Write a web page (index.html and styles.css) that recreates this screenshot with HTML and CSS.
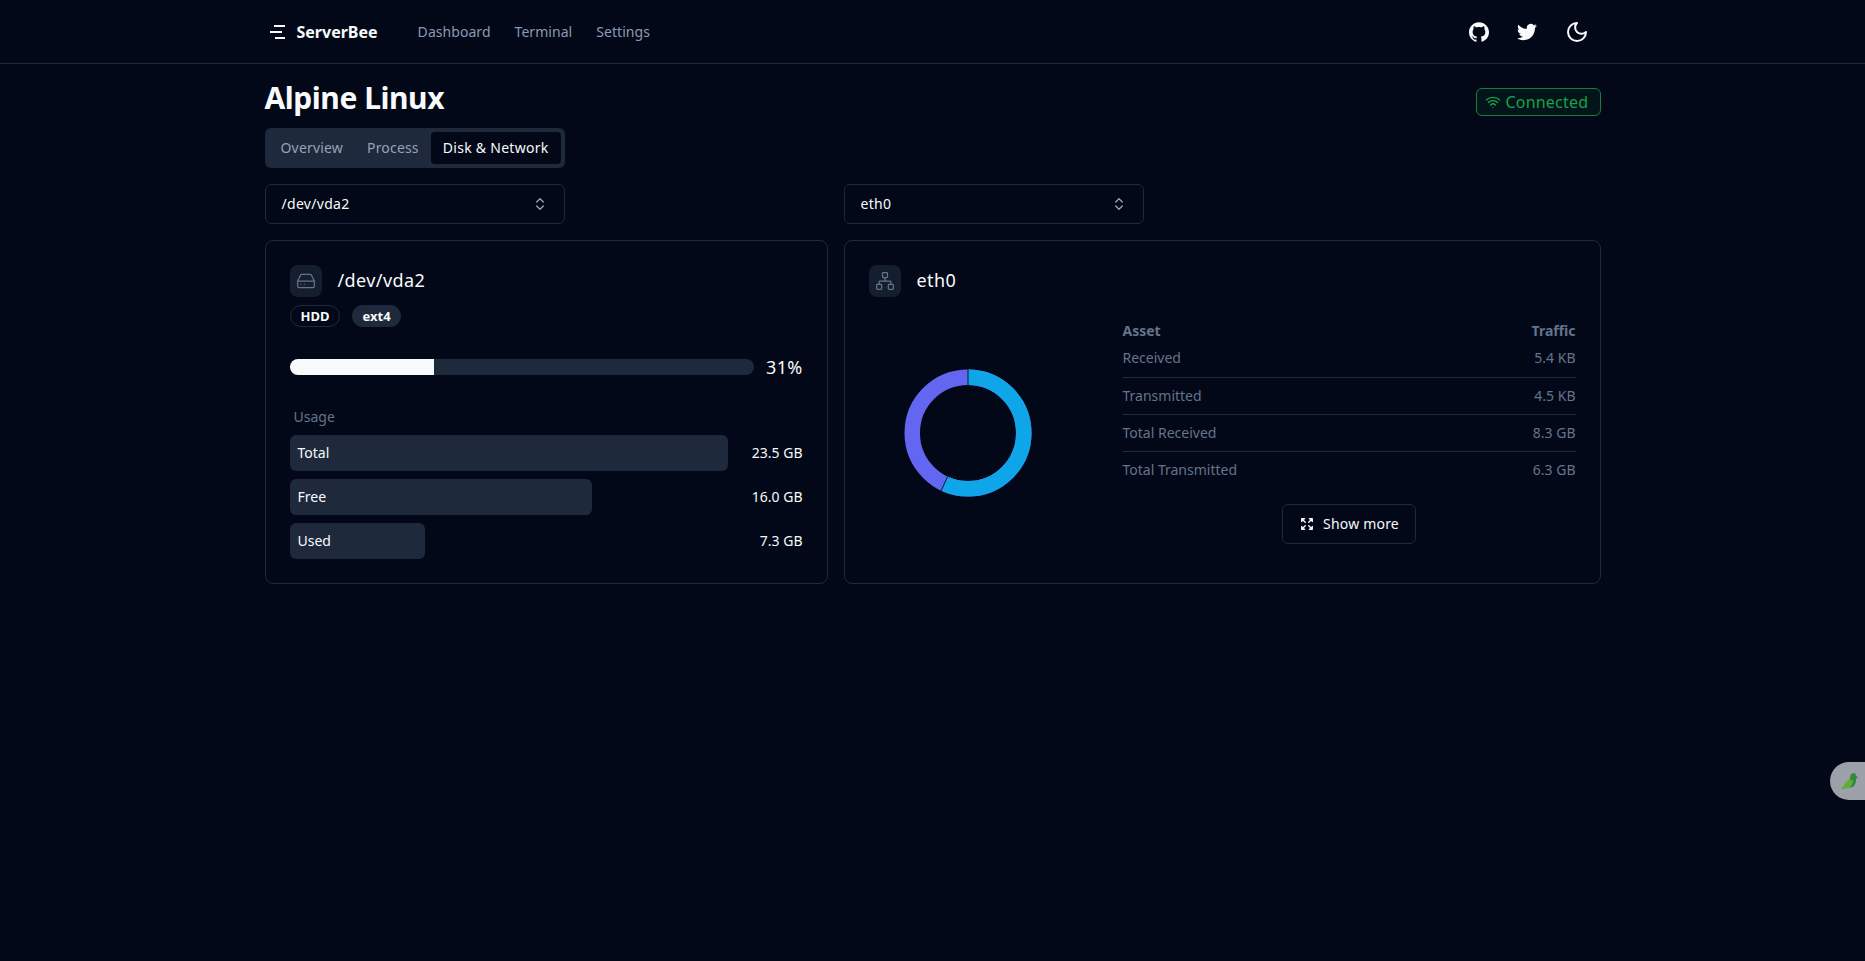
FILE: index.html
```html
<!DOCTYPE html>
<html lang="en">
<head>
<meta charset="utf-8">
<title>ServerBee</title>
<link rel="stylesheet" href="styles.css">
</head>
<body>
<header class="topbar">
  <div class="topbar-inner">
    <a class="brand">
      <svg class="brand-mark" viewBox="0 0 15 14" fill="none" stroke="currentColor" stroke-width="2"><path d="M4 1H15M0 7H12M5 13H15"/></svg>
      <span>ServerBee</span>
    </a>
    <nav class="nav"><a>Dashboard</a><a>Terminal</a><a>Settings</a></nav>
    <div class="topbar-icons">
      <svg class="top-icon" viewBox="0 0 24 24" fill="currentColor"><path d="M12 .297c-6.63 0-12 5.373-12 12 0 5.303 3.438 9.8 8.205 11.385.6.113.82-.258.82-.577 0-.285-.01-1.04-.015-2.04-3.338.724-4.042-1.61-4.042-1.61C4.422 18.07 3.633 17.7 3.633 17.7c-1.087-.744.084-.729.084-.729 1.205.084 1.838 1.236 1.838 1.236 1.07 1.835 2.809 1.305 3.495.998.108-.776.417-1.305.76-1.605-2.665-.3-5.466-1.332-5.466-5.93 0-1.31.465-2.38 1.235-3.22-.135-.303-.54-1.523.105-3.176 0 0 1.005-.322 3.3 1.23.96-.267 1.98-.399 3-.405 1.02.006 2.04.138 3 .405 2.28-1.552 3.285-1.23 3.285-1.23.645 1.653.24 2.873.12 3.176.765.84 1.23 1.91 1.23 3.22 0 4.61-2.805 5.625-5.475 5.92.42.36.81 1.096.81 2.22 0 1.606-.015 2.896-.015 3.286 0 .315.21.69.825.57C20.565 22.092 24 17.592 24 12.297c0-6.627-5.373-12-12-12"/></svg>
      <svg class="top-icon" viewBox="0 0 24 24" fill="currentColor"><path d="M23.953 4.57a10 10 0 01-2.825.775 4.958 4.958 0 002.163-2.723c-.951.555-2.005.959-3.127 1.184a4.92 4.92 0 00-8.384 4.482C7.69 8.095 4.067 6.13 1.64 3.162a4.822 4.822 0 00-.666 2.475c0 1.71.87 3.213 2.188 4.096a4.904 4.904 0 01-2.228-.616v.06a4.923 4.923 0 003.946 4.827 4.996 4.996 0 01-2.212.085 4.936 4.936 0 004.604 3.417 9.867 9.867 0 01-6.102 2.105c-.39 0-.779-.023-1.17-.067a13.995 13.995 0 007.557 2.209c9.053 0 13.998-7.496 13.998-13.985 0-.21 0-.42-.015-.63A9.935 9.935 0 0024 4.59z"/></svg>
      <svg class="moon-icon" viewBox="0 0 24 24" fill="none" stroke="currentColor" stroke-width="2" stroke-linecap="round" stroke-linejoin="round"><path d="M12 3a6 6 0 0 0 9 9 9 9 0 1 1-9-9Z"/></svg>
    </div>
  </div>
</header>

<main class="page">
  <div class="title-row">
    <h1>Alpine Linux</h1>
    <div class="status">
      <svg class="status-icon" viewBox="0 0 24 24" fill="none" stroke="currentColor" stroke-width="2" stroke-linecap="round" stroke-linejoin="round"><path d="M12 20h.01"/><path d="M2 8.82a15 15 0 0 1 20 0"/><path d="M5 12.859a10 10 0 0 1 14 0"/><path d="M8.5 16.429a5 5 0 0 1 7 0"/></svg>
      <span>Connected</span>
    </div>
  </div>

  <div class="tabs">
    <span class="tab">Overview</span>
    <span class="tab">Process</span>
    <span class="tab tab-active">Disk &amp; Network</span>
  </div>

  <div class="columns">
    <div class="select">
      <span>/dev/vda2</span>
      <svg class="sort-icon" viewBox="0 0 24 24" fill="none" stroke="currentColor" stroke-width="2" stroke-linecap="round" stroke-linejoin="round"><path d="m7 15 5 5 5-5"/><path d="m7 9 5-5 5 5"/></svg>
    </div>
    <div class="select-cell">
      <div class="select">
        <span>eth0</span>
        <svg class="sort-icon" viewBox="0 0 24 24" fill="none" stroke="currentColor" stroke-width="2" stroke-linecap="round" stroke-linejoin="round"><path d="m7 15 5 5 5-5"/><path d="m7 9 5-5 5 5"/></svg>
      </div>
    </div>

    <section class="card">
      <div class="card-head">
        <div class="icon-box">
          <svg viewBox="0 0 24 24" fill="none" stroke="currentColor" stroke-width="2" stroke-linecap="round" stroke-linejoin="round"><path d="M22 12H2"/><path d="M5.45 5.11 2 12v6a2 2 0 0 0 2 2h16a2 2 0 0 0 2-2v-6l-3.45-6.89A2 2 0 0 0 16.76 4H7.24a2 2 0 0 0-1.79 1.11z"/><path d="M6 16h.01"/><path d="M10 16h.01"/></svg>
        </div>
        <h2>/dev/vda2</h2>
      </div>
      <div class="badges">
        <span class="badge badge-outline">HDD</span>
        <span class="badge badge-solid">ext4</span>
      </div>
      <div class="progress-row">
        <div class="progress"><div class="progress-fill" style="width:31%"></div></div>
        <span class="progress-label">31%</span>
      </div>
      <div class="usage-label">Usage</div>
      <div class="usage-list">
        <div class="usage-row"><div class="usage-track"><div class="usage-bar" style="width:100%">Total</div></div><span class="usage-value">23.5 GB</span></div>
        <div class="usage-row"><div class="usage-track"><div class="usage-bar" style="width:68.96%">Free</div></div><span class="usage-value">16.0 GB</span></div>
        <div class="usage-row"><div class="usage-track"><div class="usage-bar" style="width:31.03%">Used</div></div><span class="usage-value">7.3 GB</span></div>
      </div>
    </section>

    <section class="card">
      <div class="card-head">
        <div class="icon-box">
          <svg viewBox="0 0 24 24" fill="none" stroke="currentColor" stroke-width="2" stroke-linecap="round" stroke-linejoin="round"><rect x="16" y="16" width="6" height="6" rx="1"/><rect x="2" y="16" width="6" height="6" rx="1"/><rect x="9" y="2" width="6" height="6" rx="1"/><path d="M5 16v-3a1 1 0 0 1 1-1h12a1 1 0 0 1 1 1v3"/><path d="M12 12V8"/></svg>
        </div>
        <h2>eth0</h2>
      </div>
      <div class="net-body">
        <div class="donut-wrap">
          <svg class="donut" viewBox="0 0 128 128" fill="none">
            <circle class="donut-base" cx="64" cy="64" r="55.75"/>
            <circle class="donut-arc" cx="64" cy="64" r="55.75" pathLength="100" stroke-dasharray="57 43" transform="rotate(-90 64 64)"/>
            <path class="donut-sep" d="M64 0V16.500M43.700 107.500L37 122"/>
          </svg>
        </div>
        <div class="net-table-wrap">
          <table class="net-table">
            <thead><tr><th>Asset</th><th class="num">Traffic</th></tr></thead>
            <tbody>
              <tr><td>Received</td><td class="num">5.4 KB</td></tr>
              <tr><td>Transmitted</td><td class="num">4.5 KB</td></tr>
              <tr><td>Total Received</td><td class="num">8.3 GB</td></tr>
              <tr><td>Total Transmitted</td><td class="num">6.3 GB</td></tr>
            </tbody>
          </table>
          <button class="more-btn">
            <svg viewBox="0 0 24 24" fill="none" stroke="currentColor" stroke-width="2.400" stroke-linecap="round" stroke-linejoin="round"><path d="m21 21-6-6m6 6v-4.800m0 4.800h-4.800"/><path d="M3 16.200V21m0 0h4.800M3 21l6-6"/><path d="M21 7.800V3m0 0h-4.800M21 3l-6 6"/><path d="M3 7.800V3m0 0h4.800M3 3l6 6"/></svg>
            <span>Show more</span>
          </button>
        </div>
      </div>
    </section>
  </div>
</main>

<div class="float-bubble">
  <svg viewBox="0 0 17 17"><path fill="#2f8a3e" d="M9 5 10 1l4-1 1 3 2 1-2 2c0 4-1 6-3 8l-6 1Z"/><path fill="#5fae3a" d="M0 16 6 8c2-2 6-2 6 0 0 3-2 6-5 7-2 1-5 1-7 1Z"/></svg>
</div>
</body>
</html>
```
FILE: styles.css
```css
* { box-sizing: border-box; }
html, body { margin: 0; height: 100%; }
body {
  background: #020817;
  color: #f8fafc;
  font-family: "Noto Sans", "Open Sans", sans-serif;
  font-size: 14px;
  line-height: 20px;
  overflow: hidden;
}
.topbar { height: 64px; border-bottom: 1px solid #1e293b; }
.topbar-inner {
  width: 1336px;
  height: 63px;
  margin: 0 auto;
  display: flex;
  align-items: center;
}
.brand { display: flex; align-items: center; gap: 12px; margin-left: 5px; font-weight: 700; font-size: 16px; }
.brand-mark { width: 15px; height: 14px; }
.nav { display: flex; gap: 24px; margin-left: 40px; color: #8b9ab4; letter-spacing: .05px; }
.topbar-icons { margin-left: auto; display: flex; align-items: center; gap: 28px; padding-right: 12px; }
.top-icon { width: 20px; height: 20px; }
.moon-icon { width: 24px; height: 24px; }
.page { width: 1336px; margin: 0 auto; }
.title-row { display: flex; justify-content: space-between; align-items: flex-start; height: 64px; }
h1 { margin: 0; font-size: 30px; line-height: 36px; font-weight: 700; padding-top: 16px; letter-spacing: -.45px; }
.status {
  margin-top: 24px;
  height: 28px;
  width: 125px;
  display: flex;
  align-items: center;
  gap: 5px;
  padding-left: 8px;
  border: 1px solid #15803d;
  border-radius: 6px;
  background: rgba(22, 163, 74, .08);
  color: #16a34a;
  font-size: 16px;
  letter-spacing: .2px;
}
.status-icon { width: 16px; height: 16px; }
.tabs {
  display: inline-flex;
  height: 40px;
  padding: 4px;
  background: #1e293b;
  border-radius: 6px;
  color: #94a3b8;
}
.tab { padding: 6px 12px; border-radius: 4px; letter-spacing: .18px; }
.tab-active { background: #020817; color: #f8fafc; letter-spacing: .28px; }
.columns {
  display: grid;
  grid-template-columns: 563fr 757fr;
  gap: 16px;
  margin-top: 16px;
}
.select-cell { min-width: 0; }
.select {
  width: 300px;
  height: 40px;
  padding: 0 16px;
  display: flex;
  align-items: center;
  justify-content: space-between;
  border: 1px solid #1e293b;
  border-radius: 6px;
  letter-spacing: .3px;
}
.sort-icon { width: 16px; height: 16px; color: #94a3b8; }
.card {
  height: 344px;
  padding: 24px;
  border: 1px solid #1e293b;
  border-radius: 8px;
}
.card-head { display: flex; align-items: center; gap: 16px; height: 32px; }
.card-head h2 { margin: 0 0 2px; font-size: 18px; font-weight: 400; line-height: 28px; letter-spacing: .4px; }
.icon-box {
  width: 32px;
  height: 32px;
  padding: 6px;
  border-radius: 8px;
  background: #151e2e;
  color: #64748b;
}
.icon-box svg { display: block; width: 20px; height: 20px; stroke-width: 1.5; }
.badges { display: flex; gap: 12px; margin-top: 8px; }
.badge {
  height: 22px;
  display: inline-flex;
  align-items: center;
  padding: 0 10px;
  border-radius: 11px;
  font-size: 13px;
  font-weight: 700;
  line-height: 16px;
}
.badge-outline { border: 1px solid #1e293b; }
.badge-solid { background: #1e293b; }
.progress-row { display: flex; align-items: center; gap: 12px; margin-top: 32px; height: 16px; }
.progress { flex: 1; height: 16px; border-radius: 8px; background: #1e293b; overflow: hidden; }
.progress-fill { height: 100%; background: #f8fafc; }
.progress-label { font-size: 18px; line-height: 28px; letter-spacing: .3px; }
.usage-label { margin-top: 32px; padding-left: 4px; color: #64748b; }
.usage-list { margin-top: 8px; display: flex; flex-direction: column; gap: 8px; }
.usage-row { display: flex; align-items: center; }
.usage-track { width: 438px; margin-right: auto; }
.usage-bar {
  height: 36px;
  padding: 8px;
  background: #1e293b;
  border-radius: 6px;
  line-height: 20px;
}
.usage-value { white-space: nowrap; }
.net-body { display: grid; grid-template-columns: 254px 1fr; margin-top: 16px; }
.donut-wrap { padding: 56px 0 0 35px; }
.donut { width: 128px; height: 128px; display: block; }
.donut-base { stroke: #6366f1; stroke-width: 15.5; }
.donut-arc { stroke: #0ea5e9; stroke-width: 15.5; }
.donut-sep { stroke: #0f172a; stroke-width: 1; }
.net-table { width: 100%; border-collapse: collapse; color: #64748b; }
.net-table th { font-weight: 700; text-align: left; height: 27px; padding: 9px 0 0; line-height: 18px; }
.net-table td { height: 37px; padding: 0; border-bottom: 1px solid #1e293b; }
.net-table tbody tr:last-child td { border-bottom: 0; }
.net-table .num { text-align: right; }
.more-btn {
  display: flex;
  align-items: center;
  gap: 9px;
  width: 134px;
  height: 40px;
  margin: 16px auto 0;
  padding: 0 0 0 17px;
  background: transparent;
  color: #f8fafc;
  border: 1px solid #1e293b;
  border-radius: 6px;
  font: inherit;
  letter-spacing: .2px;
  white-space: nowrap;
}
.more-btn svg { width: 14px; height: 14px; flex: none; }
.float-bubble {
  position: fixed;
  right: 0;
  top: 762px;
  width: 35px;
  height: 38px;
  padding: 11px 0 0 11px;
  background: #9ca0a8;
  border-radius: 19px 0 0 19px;
}
.float-bubble svg { display: block; width: 17px; height: 17px; }
```
